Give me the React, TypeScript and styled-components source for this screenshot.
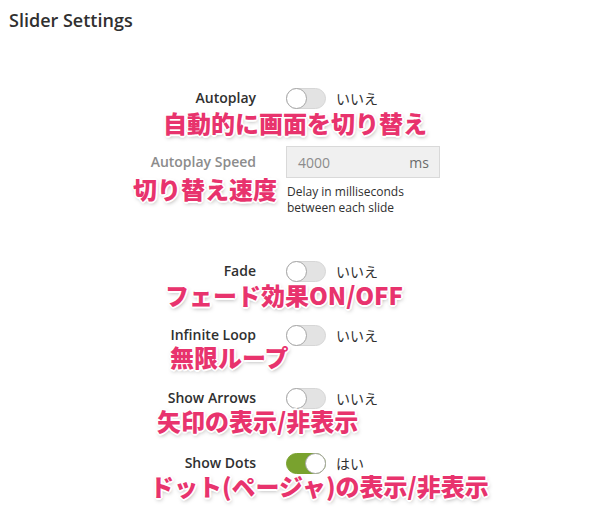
import styled, { createGlobalStyle, css } from 'styled-components'

const GlobalStyle = createGlobalStyle`
  * { box-sizing: border-box; }
  body {
    margin: 0;
    background: #ffffff;
    font-family: "Open Sans", "Noto Sans CJK JP", sans-serif;
    color: #303030;
  }
`

interface INote {
  text: string
  left: number
  top: number
}

interface IToggleRow {
  label: string
  on: boolean
  gap: number
  note: INote
}

const toggleRows: IToggleRow[] = [
  { label: 'Fade', on: false, gap: 45, note: { text: 'フェード効果ON/OFF', left: 165, top: 21 } },
  { label: 'Infinite Loop', on: false, gap: 44, note: { text: '無限ループ', left: 170, top: 19 } },
  { label: 'Show Arrows', on: false, gap: 43, note: { text: '矢印の表示/非表示', left: 157, top: 20 } },
  { label: 'Show Dots', on: true, gap: 45, note: { text: 'ドット(ページャ)の表示/非表示', left: 150, top: 20 } },
]

function Switch({ on }: { on: boolean }) {
  return (
    <SwitchBox>
      <Track on={on}>
        <Knob on={on} />
      </Track>
      <SwitchValue>{on ? 'はい' : 'いいえ'}</SwitchValue>
    </SwitchBox>
  )
}

function App() {
  return (
    <>
      <GlobalStyle />
      <Page>
        <Title>Slider Settings</Title>

        <Fields>
          <Field gap={57}>
            <Label>Autoplay</Label>
            <Switch on={false} />
            <Callout left={163} top={22}>自動的に画面を切り替え</Callout>
          </Field>

          <Field gap={38}>
            <Label muted>Autoplay Speed</Label>
            <SpeedBox>
              <SpeedInput>
                <span>4000</span>
                <Unit>ms</Unit>
              </SpeedInput>
              <Hint>Delay in milliseconds<br />between each slide</Hint>
            </SpeedBox>
            <Callout left={133} top={30}>切り替え速度</Callout>
          </Field>

          {toggleRows.map(row => (
            <Field key={row.label} gap={row.gap}>
              <Label>{row.label}</Label>
              <Switch on={row.on} />
              <Callout left={row.note.left} top={row.note.top}>{row.note.text}</Callout>
            </Field>
          ))}
        </Fields>
      </Page>
    </>
  )
}


const Page = styled.div`
  width: 610px;
  height: 508px;
  padding: 9px 0 0 9px;
  overflow: hidden;
`

const Title = styled.h1`
  margin: 0;
  font-size: 18px;
  line-height: 22px;
  font-weight: 600;
  color: #303030;
`

const Fields = styled.div`
  display: flex;
  flex-direction: column;
  margin-left: -9px;
`

interface IField {
  gap: number
}

const Field = styled.div<IField>`
  ${props => css`
    position: relative;
    display: grid;
    grid-template-columns: 256px auto;
    column-gap: 30px;
    align-items: start;
    margin-top: ${props.gap}px;
  `}
`

const Label = styled.div<{ muted?: boolean }>`
  ${props => css`
    text-align: right;
    font-size: 14px;
    font-weight: 600;
    line-height: 20px;
    color: ${props.muted ? '#8c8c8c' : '#303030'};
    padding-top: ${props.muted ? '6px' : '0'};
  `}
`

const SwitchBox = styled.div`
  display: flex;
  align-items: center;
  gap: 10px;
  height: 20px;
`

const Track = styled.div<{ on: boolean }>`
  ${props => css`
    position: relative;
    width: 40px;
    height: 21px;
    border-radius: 11px;
    background: ${props.on ? '#79a22e' : '#e3e3e3'};
    border: 1px solid ${props.on ? '#79a22e' : '#d6d6d6'};
  `}
`

const Knob = styled.div<{ on: boolean }>`
  ${props => css`
    position: absolute;
    top: -1px;
    left: ${props.on ? '18px' : '-1px'};
    width: 21px;
    height: 21px;
    border-radius: 50%;
    background: #ffffff;
    border: 1px solid #a6a6a6;
  `}
`

const SwitchValue = styled.span`
  font-family: "Noto Sans CJK JP", sans-serif;
  font-size: 14px;
  color: #303030;
`

const SpeedBox = styled.div`
  display: flex;
  flex-direction: column;
`

const SpeedInput = styled.div`
  width: 154px;
  height: 32px;
  display: flex;
  align-items: center;
  justify-content: space-between;
  padding: 0 10px 0 11px;
  background: #f0f0f0;
  border: 1px solid #d9d9d9;
  font-size: 14px;
  color: #8c8c8c;
`

const Unit = styled.span`
  color: #6b6b6b;
`

const Hint = styled.p`
  margin: 6px 0 0 1px;
  font-size: 12px;
  line-height: 16px;
  color: #303030;
`

interface ICallout {
  left: number
  top: number
}

const Callout = styled.div<ICallout>`
  ${props => css`
    position: absolute;
    left: ${props.left}px;
    top: ${props.top}px;
    font-family: "Noto Sans CJK JP", sans-serif;
    font-size: 24px;
    font-weight: 900;
    line-height: 26px;
    white-space: nowrap;
    color: #e8336d;
    text-shadow:
      1px 1px 0 #fff, -1px -1px 0 #fff, 1px -1px 0 #fff, -1px 1px 0 #fff,
      2px 0 0 #fff, -2px 0 0 #fff, 0 2px 0 #fff, 0 -2px 0 #fff,
      1px 2px 4px rgba(0, 0, 0, 0.35);
  `}
`

export default App
